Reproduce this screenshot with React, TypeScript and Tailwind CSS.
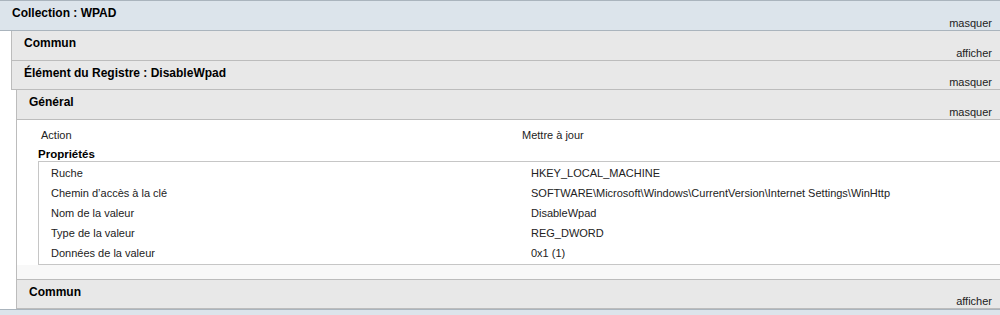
import React from "react";

type Row = { label: string; value: string };

const props: Row[] = [
  { label: "Ruche", value: "HKEY_LOCAL_MACHINE" },
  { label: "Chemin d’accès à la clé", value: "SOFTWARE\\Microsoft\\Windows\\CurrentVersion\\Internet Settings\\WinHttp" },
  { label: "Nom de la valeur", value: "DisableWpad" },
  { label: "Type de la valeur", value: "REG_DWORD" },
  { label: "Données de la valeur", value: "0x1 (1)" },
];

function SectionHeader({
  title,
  toggle,
  blue,
  short,
}: {
  title: string;
  toggle: string;
  blue?: boolean;
  short?: boolean;
}) {
  return (
    <div
      className={`flex justify-between border-b ${short ? "h-[29px]" : "h-[30px]"} ${
        blue ? "bg-[#dce4eb] border-[#aab4bd]" : "bg-[#e8e8e8] border-[#bcbcbc] border-l"
      }`}
    >
      <div className="self-start pl-3 pt-[5px] text-[12px] font-bold leading-[14px] text-black">{title}</div>
      <div className="self-end pr-2 leading-[13px] text-[#222]">{toggle}</div>
    </div>
  );
}

export default function App() {
  return (
    <div className="h-[315px] w-[1000px] overflow-hidden bg-white font-['Liberation_Sans',Arial,sans-serif] text-[11px]">
      <div className="border-t border-[#aab4bd]">
        <SectionHeader title="Collection : WPAD" toggle="masquer" blue />
      </div>

      <div className="ml-[11px]">
        <SectionHeader title="Commun" toggle="afficher" />
        <SectionHeader title="Élément du Registre : DisableWpad" toggle="masquer" short />

        <div className="ml-[5px]">
          <SectionHeader title="Général" toggle="masquer" />

          <div className="border-b border-l border-[#bcbcbc] bg-white">
            <div className="grid grid-cols-[481px_1fr] pl-6 pt-2 leading-[14px] text-[#222]">
              <span>Action</span>
              <span>Mettre à jour</span>
            </div>

            <div className="mt-[5px] pl-[21px]">
              <div className="text-[11.5px] font-bold leading-[14px] text-black">Propriétés</div>
              <div className="border-y border-l border-[#c6c6c6] bg-white py-px">
                {props.map((r) => (
                  <div key={r.label} className="grid h-5 grid-cols-[480px_1fr] items-center pl-3 text-[#222]">
                    <span>{r.label}</span>
                    <span className="whitespace-nowrap">{r.value}</span>
                  </div>
                ))}
              </div>
            </div>
            <div className="h-[14px] bg-[#f8f8f8]" />
          </div>

          <SectionHeader title="Commun" toggle="afficher" short />
        </div>
      </div>

      <div className="h-6 border-t border-[#aab4bd] bg-[#dce4eb]" />
    </div>
  );
}
